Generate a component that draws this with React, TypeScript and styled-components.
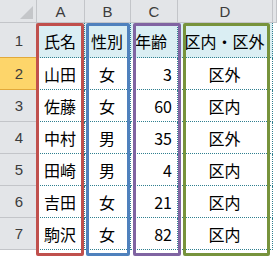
import React from 'react';
import styled, { createGlobalStyle } from 'styled-components';

const GlobalStyle = createGlobalStyle`
  html, body {
    margin: 0;
    padding: 0;
    background: #ffffff;
  }
  body {
    width: 277px;
    height: 259px;
    overflow: hidden;
  }
`;

const Sheet = styled.div`
  display: grid;
  grid-template-columns: 37px 48px 46px 47px 95px 4px;
  grid-template-rows: 23px 35px repeat(6, 32px);
  width: 277px;
  font-family: "Noto Sans CJK JP", "Noto Sans", sans-serif;
`;

type Pos = { $r: number; $c: number };

const Corner = styled.div`
  grid-row: 1;
  grid-column: 1;
  position: relative;
  background: #e3e5e8;
  border-right: 1px solid #c3c5c9;
  border-bottom: 1px solid #c3c5c9;
  box-sizing: border-box;
  &:after {
    content: '';
    position: absolute;
    right: 3px;
    bottom: 3px;
    width: 0;
    height: 0;
    border-left: 13px solid transparent;
    border-bottom: 13px solid #c4c6c9;
  }
`;

const ColHead = styled.div<{ $c: number }>`
  grid-row: 1;
  grid-column: ${({ $c }) => $c};
  display: flex;
  align-items: center;
  justify-content: center;
  background: #e3e5e8;
  border-right: 1px solid #c3c5c9;
  border-bottom: 1px solid #c3c5c9;
  box-sizing: border-box;
  font-family: "Liberation Sans", Arial, sans-serif;
  font-size: 15px;
  color: #3c3c3c;
`;

const RowHead = styled.div<{ $r: number; $active?: boolean }>`
  grid-row: ${({ $r }) => $r};
  grid-column: 1;
  display: flex;
  align-items: center;
  justify-content: center;
  background: ${({ $active }) => ($active ? '#fdd56a' : '#e3e5e8')};
  border-top: ${({ $active }) => ($active ? '1px solid #e2a93a' : 'none')};
  border-right: 1px solid ${({ $active }) => ($active ? '#e2a93a' : '#c3c5c9')};
  border-bottom: 1px solid ${({ $active }) => ($active ? '#e2a93a' : '#c3c5c9')};
  margin-top: ${({ $active }) => ($active ? '-1px' : '0')};
  box-sizing: border-box;
  font-family: "Liberation Sans", Arial, sans-serif;
  font-size: 15px;
  color: #3c3c3c;
  padding-left: 2px;
`;

const Cell = styled.div<Pos & { $align: 'left' | 'center' | 'right'; $head?: boolean }>`
  grid-row: ${({ $r }) => $r};
  grid-column: ${({ $c }) => $c};
  display: flex;
  align-items: center;
  justify-content: ${({ $align }) =>
    $align === 'left' ? 'flex-start' : $align === 'right' ? 'flex-end' : 'center'};
  padding: ${({ $head }) => ($head ? '2px 5px 0 4px' : '0 5px 0 4px')};
  background: ${({ $head }) => ($head ? '#daeef3' : '#ffffff')};
  border-right: 1px dotted #2f7f8f;
  border-bottom: 1px dotted #2f7f8f;
  box-sizing: border-box;
  font-size: 16px;
  color: #000000;
  white-space: nowrap;
`;

const Frame = styled.div<{ $color: string; $c: number; $margin: string }>`
  grid-column: ${({ $c }) => $c};
  grid-row: 2 / 9;
  margin: ${({ $margin }) => $margin};
  border: 3px solid ${({ $color }) => $color};
  border-radius: 2px;
  box-sizing: border-box;
  pointer-events: none;
  z-index: 2;
`;

type Align = 'left' | 'center' | 'right';

const header: { text: string; align: Align }[] = [
  { text: '氏名', align: 'center' },
  { text: '性別', align: 'center' },
  { text: '年齢', align: 'left' },
  { text: '区内・区外', align: 'center' },
];

const aligns: Align[] = ['center', 'center', 'right', 'center'];

const rows: (string | number)[][] = [
  ['山田', '女', 3, '区外'],
  ['佐藤', '女', 60, '区内'],
  ['中村', '男', 35, '区外'],
  ['田崎', '男', 4, '区内'],
  ['吉田', '女', 21, '区内'],
  ['駒沢', '女', 82, '区内'],
];

const frames = [
  { color: '#c0504d', col: 2, margin: '0 1px -6px -1px' },
  { color: '#4f81bd', col: 3, margin: '0 1px -6px 1px' },
  { color: '#8064a2', col: 4, margin: '0 -3px -6px 2px' },
  { color: '#77933c', col: 5, margin: '0 3px -6px 5px' },
];

export default function App() {
  return (
    <>
      <GlobalStyle />
      <Sheet>
        <Corner />
        {['A', 'B', 'C', 'D', ''].map((c, i) => (
          <ColHead key={i} $c={i + 2}>
            {c}
          </ColHead>
        ))}

        <RowHead $r={2}>1</RowHead>
        {header.map((h, i) => (
          <Cell key={i} $r={2} $c={i + 2} $align={h.align} $head>
            {h.text}
          </Cell>
        ))}

        {rows.map((r, i) => (
          <React.Fragment key={i}>
            <RowHead $r={i + 3} $active={i === 0}>
              {i + 2}
            </RowHead>
            {r.map((v, j) => (
              <Cell key={j} $r={i + 3} $c={j + 2} $align={aligns[j]}>
                {v}
              </Cell>
            ))}
          </React.Fragment>
        ))}

        {frames.map((f, i) => (
          <Frame key={i} $color={f.color} $c={f.col} $margin={f.margin} />
        ))}
      </Sheet>
    </>
  );
}
